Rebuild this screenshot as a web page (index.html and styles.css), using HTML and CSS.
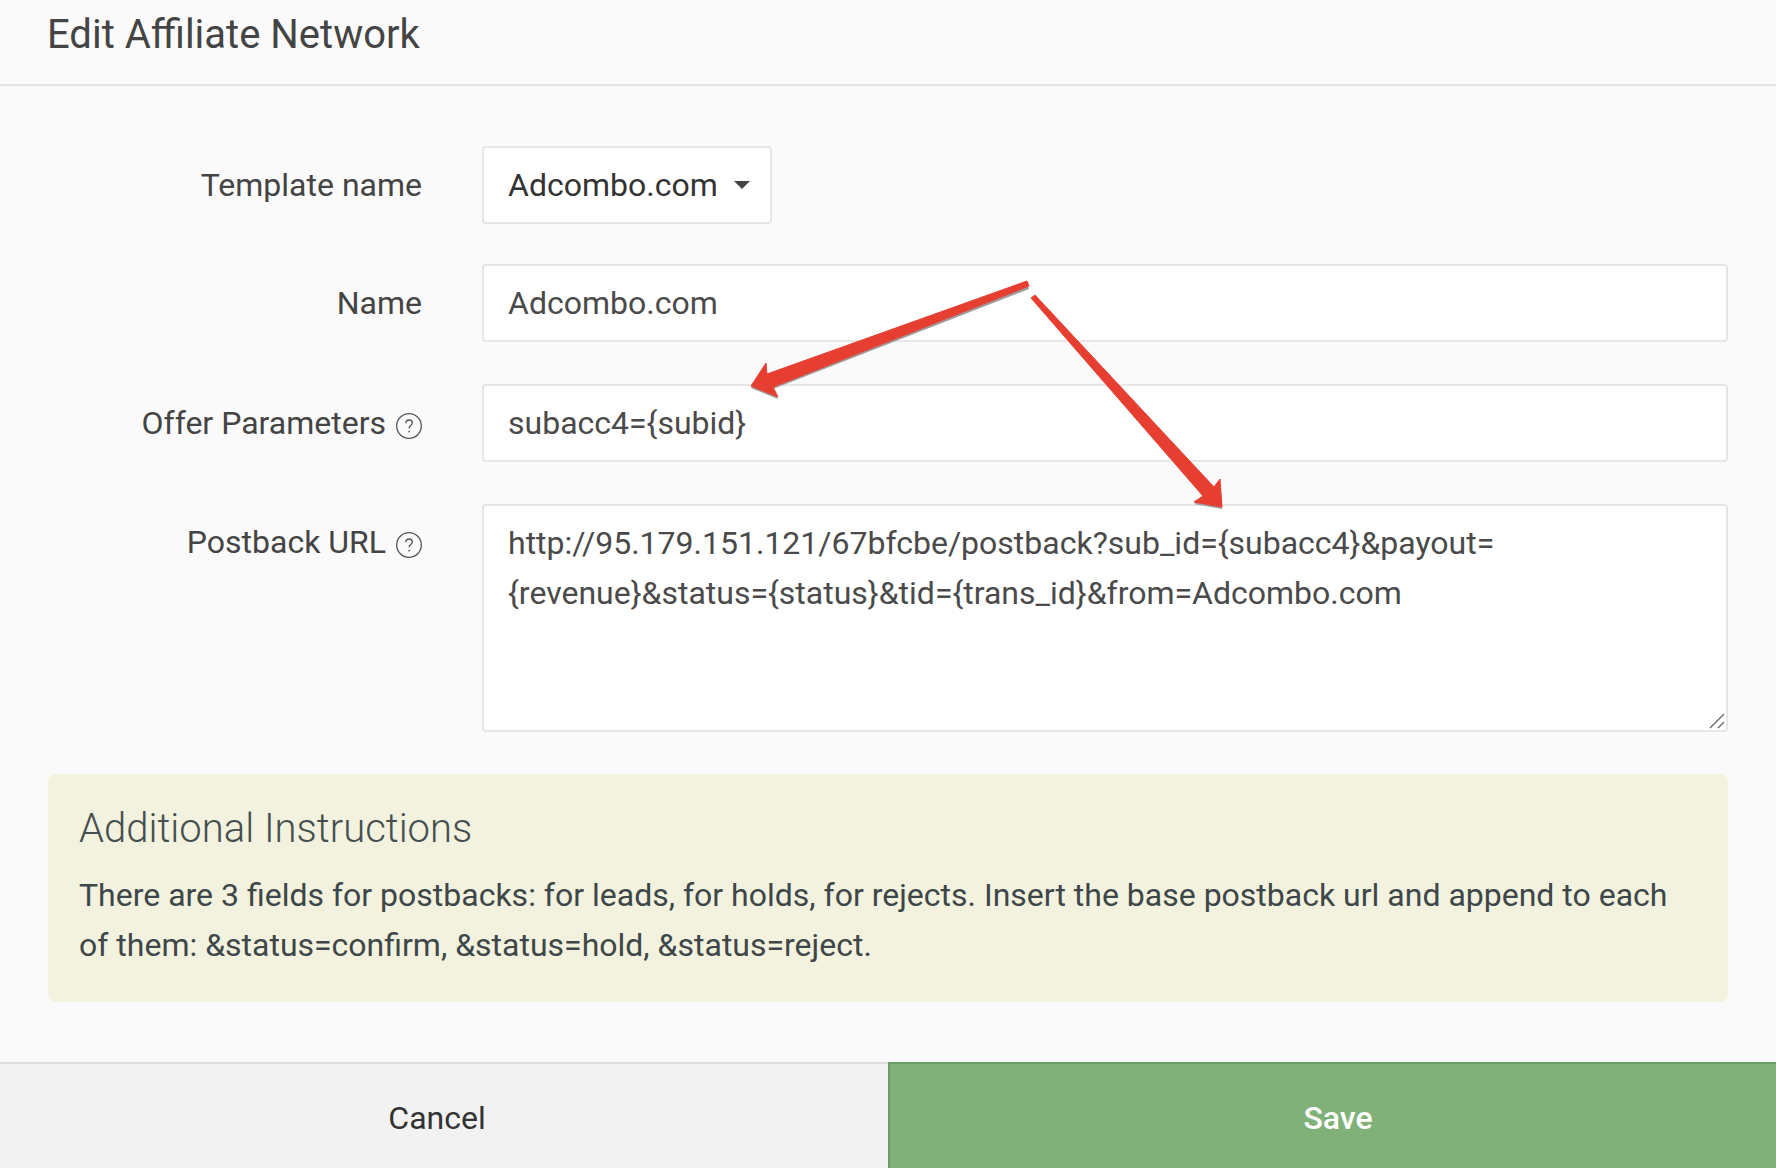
FILE: index.html
```html
<!DOCTYPE html>
<html lang="en">
<head>
<meta charset="utf-8">
<title>Edit Affiliate Network</title>
<link rel="stylesheet" href="styles.css">
</head>
<body>
<div class="modal">
  <header class="modal-header"><h1 class="modal-title">Edit Affiliate Network</h1></header>
  <main class="modal-body">
    <form class="form">
      <div class="row row-template">
        <label class="label">Template name</label>
        <div class="select"><span>Adcombo.com</span><span class="caret"></span></div>
      </div>
      <div class="row row-name">
        <label class="label">Name</label>
        <input class="input" type="text" value="Adcombo.com">
      </div>
      <div class="row row-offer">
        <label class="label">Offer Parameters
          <svg class="help" viewBox="0 0 26 26"><circle cx="13" cy="13" r="12.3"/><path d="M9.8 10.2c0-2 1.4-3.2 3.3-3.2s3.2 1.2 3.2 2.9c0 2.6-3.2 2.6-3.2 5.3"/><circle class="dot" cx="13.1" cy="18.6" r="0.9"/></svg>
        </label>
        <input class="input" type="text" value="subacc4={subid}">
      </div>
      <div class="row row-postback">
        <label class="label label-top">Postback URL
          <svg class="help" viewBox="0 0 26 26"><circle cx="13" cy="13" r="12.3"/><path d="M9.8 10.2c0-2 1.4-3.2 3.3-3.2s3.2 1.2 3.2 2.9c0 2.6-3.2 2.6-3.2 5.3"/><circle class="dot" cx="13.1" cy="18.6" r="0.9"/></svg>
        </label>
        <div class="textarea-wrap">
          <textarea class="input textarea">http://95.179.151.121/67bfcbe/postback?sub_id={subacc4}&amp;payout={revenue}&amp;status={status}&amp;tid={trans_id}&amp;from=Adcombo.com</textarea>
          <svg class="grip" viewBox="0 0 16 16"><path d="M1 15 L15 1 M9 15 L15 9"/></svg>
        </div>
      </div>
    </form>
    <section class="note">
      <h2 class="note-title">Additional Instructions</h2>
      <p class="note-text">There are 3 fields for postbacks: for leads, for holds, for rejects. Insert the base postback url and append to each of them: &amp;status=confirm, &amp;status=hold, &amp;status=reject.</p>
    </section>
  </main>
  <footer class="modal-footer">
    <button class="btn btn-cancel" type="button">Cancel</button>
    <button class="btn btn-save" type="button">Save</button>
  </footer>
</div>
<svg class="arrows" viewBox="0 0 1776 1168" aria-hidden="true">
  <g class="arrow-shadow">
    <path d="M1027 283 L767 376 L766 365 L751 388 L778 399 L773 389 L1029 289 Z"/>
    <path d="M1214 489 L1220 481 L1222 509 L1194 504 L1203 498 Z"/>
  </g>
  <g class="arrow">
    <path d="M1027 281 L767 374 L766 363 L751 386 L778 397 L773 387 L1029 286 Z"/>
    <path d="M1035 295 L1214 487 L1220 479 L1222 507 L1194 502 L1203 496 L1031 298 Z"/>
  </g>
</svg>
</body>
</html>
```
FILE: styles.css
```css
* { box-sizing: border-box; }
html, body { margin: 0; padding: 0; }
body {
  width: 1776px;
  height: 1168px;
  overflow: hidden;
  background: #fafafa;
  font-family: Roboto, "Liberation Sans", sans-serif;
  color: #444;
  position: relative;
}
.modal { display: flex; flex-direction: column; height: 1168px; }
.modal-header {
  height: 86px;
  padding: 0 47px;
  display: flex;
  align-items: center;
  border-bottom: 2px solid #e4e4e4;
}
.modal-title { margin: -16px 0 0; font-size: 40px; font-weight: 400; color: #444; }
.modal-body { flex: 1; padding: 60px 48px 0; }
.row { display: grid; grid-template-columns: 374px 1fr; column-gap: 60px; align-items: center; }
.row-name { margin-top: 40px; }
.row-offer { margin-top: 42px; }
.row-postback { margin-top: 42px; align-items: start; }
.label {
  display: flex;
  justify-content: flex-end;
  align-items: center;
  gap: 10px;
  font-size: 32px;
  color: #444;
}
.label-top { padding-top: 19px; }
.help { width: 26px; height: 26px; flex: none; margin-top: 6px; }
.help circle, .help path { fill: none; stroke: #555; stroke-width: 1.3; }
.help .dot { fill: #555; stroke: none; }
.input, .select {
  height: 78px;
  border: 2px solid #e6e6e6;
  border-radius: 4px;
  background: #fff;
  font-family: Roboto, "Liberation Sans", sans-serif;
  font-size: 32px;
  color: #4a4a4a;
  padding: 0 24px;
  outline: none;
}
.input { display: block; width: 100%; }
.select {
  display: inline-flex;
  align-items: center;
  justify-self: start;
  width: 290px;
  color: #333;
  gap: 16px;
}
.caret {
  width: 0; height: 0;
  border-left: 8px solid transparent;
  border-right: 8px solid transparent;
  border-top: 8px solid #444;
}
.textarea-wrap { position: relative; }
.textarea {
  height: 228px;
  padding: 12px 24px;
  line-height: 50px;
  resize: none;
}
.grip {
  position: absolute;
  right: 3px;
  bottom: 3px;
  width: 16px;
  height: 16px;
}
.grip path { fill: none; stroke: #666; stroke-width: 1.4; }
.note {
  margin-top: 42px;
  height: 228px;
  background: #f3f2df;
  border-radius: 8px;
  padding: 28px 31px;
}
.note-title { margin: 0; font-size: 40px; font-weight: 300; line-height: 54px; color: #454f4f; }
.note-text { margin: 14px 0 0; font-size: 32px; line-height: 50px; color: #3d4648; }
.modal-footer { display: grid; grid-template-columns: 888px 888px; height: 106px; }
.btn {
  border: 0;
  font-family: Roboto, "Liberation Sans", sans-serif;
  font-size: 32px;
  padding: 4px 0 0;
}
.btn-cancel { background: #f2f2f2; border-top: 2px solid #dcdcdc; color: #333; padding-right: 14px; }
.btn-save { background: #7fb178; border-top: 2px solid #6c9c66; border-left: 2px solid #6c9c66; color: #fff; font-weight: 500; padding-left: 10px; }
.arrows { position: absolute; left: 0; top: 0; width: 1776px; height: 1168px; pointer-events: none; }
.arrow path { fill: #e63f32; stroke: #e63f32; stroke-width: 1; stroke-linejoin: round; }
.arrow-shadow path { fill: #a09a9a; }
```
